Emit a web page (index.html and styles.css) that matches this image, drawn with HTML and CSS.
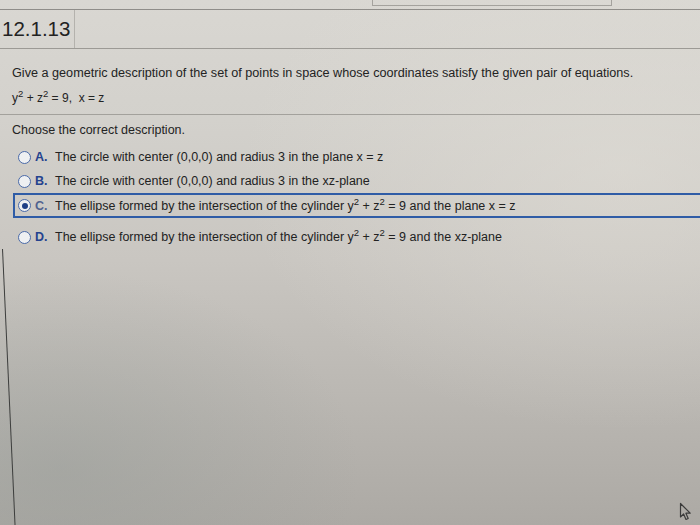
FILE: index.html
```html
<!DOCTYPE html>
<html>
<head>
<meta charset="utf-8">
<link rel="stylesheet" href="styles.css">
</head>
<body>
<div class="screen">
  <div class="topbar"><div class="tab"></div></div>
  <div class="header">
    <div class="title">12.1.13</div>
  </div>
  <div class="question">
    <p class="prompt">Give a geometric description of the set of points in space whose coordinates satisfy the given pair of equations.</p>
    <p class="eq">y<sup>2</sup> + z<sup>2</sup> = 9,&nbsp; x = z</p>
  </div>
  <div class="answers">
    <p class="choose">Choose the correct description.</p>
    <div class="option"><span class="radio"></span><span class="letter">A.</span><span class="text">The circle with center (0,0,0) and radius 3 in the plane x = z</span></div>
    <div class="option"><span class="radio"></span><span class="letter">B.</span><span class="text">The circle with center (0,0,0) and radius 3 in the xz-plane</span></div>
    <div class="option selected"><span class="radio on"></span><span class="letter">C.</span><span class="text">The ellipse formed by the intersection of the cylinder y<sup>2</sup> + z<sup>2</sup> = 9 and the plane x = z</span></div>
    <div class="option last"><span class="radio"></span><span class="letter">D.</span><span class="text">The ellipse formed by the intersection of the cylinder y<sup>2</sup> + z<sup>2</sup> = 9 and the xz-plane</span></div>
  </div>
  <div class="panel"></div>
  <svg class="cursor" width="14" height="20" viewBox="0 0 14 20">
    <path d="M1.5 1.5 L1.5 15 L4.6 12 L7 17.5 L9.2 16.5 L6.9 11.2 L11.2 11.2 Z" fill="none" stroke="#3b3b3b" stroke-width="1.2" stroke-linejoin="round"/>
  </svg>
</div>
</body>
</html>
```

FILE: styles.css
```css
html, body {
  margin: 0;
  padding: 0;
}
body {
  width: 700px;
  height: 525px;
  overflow: hidden;
  font-family: "Liberation Sans", Arial, sans-serif;
  color: #232323;
}
.screen {
  position: relative;
  width: 700px;
  height: 525px;
  display: flex;
  flex-direction: column;
  background:
    radial-gradient(ellipse 380px 260px at 620px 170px, rgba(225, 222, 215, 0.55), rgba(225, 222, 215, 0) 100%),
    radial-gradient(ellipse 300px 200px at 60px 470px, rgba(150, 156, 152, 0.45), rgba(150, 156, 152, 0) 100%),
    linear-gradient(to bottom, #d9d7d2 0px, #d3d1cc 120px, #c9c6c1 260px, #bab7b2 400px, #aca9a4 525px);
}
.topbar {
  height: 9px;
  flex: none;
  border-bottom: 1px solid #8f8d89;
  position: relative;
}
.tab {
  margin-left: 372px;
  width: 238px;
  height: 5px;
  border: 1px solid #a4a29d;
  border-top: none;
}
.header {
  height: 38px;
  flex: none;
  display: flex;
  border-bottom: 1px solid #9c9a95;
}
.title {
  width: 72px;
  padding-left: 2px;
  font-size: 20.5px;
  line-height: 38px;
  color: #222;
  border-right: 1px solid #b4b2ad;
}
.question {
  flex: none;
  padding: 14px 12px 6px;
  border-bottom: 1px solid #a3a19c;
}
.question p {
  margin: 0;
  font-size: 12.65px;
  line-height: 20px;
}
.question .eq {
  margin-top: 5px;
  font-size: 12px;
}
sup {
  font-size: 9.5px;
  line-height: 0;
  vertical-align: 5px;
}
.answers {
  flex: none;
  padding-top: 5px;
}
.choose {
  margin: 0 0 5px 12px;
  font-size: 12.5px;
  line-height: 20px;
}
.option {
  display: flex;
  align-items: center;
  height: 24px;
  font-size: 12.5px;
  padding-left: 18px;
}
.option.selected {
  height: 21px;
  margin-left: 13px;
  padding-left: 3px;
  border: 2px solid #2f5ca6;
  border-right: none;
}
.option.last {
  margin-top: 7px;
}
.radio {
  width: 11px;
  height: 11px;
  border: 1.5px solid #4a6aa8;
  border-radius: 50%;
  background: #eef0f2;
  flex: none;
  position: relative;
}
.radio.on::after {
  content: "";
  position: absolute;
  left: 2.5px;
  top: 2.5px;
  width: 6px;
  height: 6px;
  border-radius: 50%;
  background: #1e3f86;
}
.letter {
  width: 20px;
  margin-left: 4px;
  font-weight: bold;
  color: #24428e;
}
.selected .letter {
  color: #51628f;
}
.text {
  color: #222;
}
.panel {
  flex: 1;
  margin-top: 0;
  margin-left: 2px;
  border-left: 1.5px solid #3c3d3c;
  transform: skewX(2.6deg);
  transform-origin: top left;
}
.cursor {
  position: absolute;
  left: 679px;
  top: 502px;
}
```
